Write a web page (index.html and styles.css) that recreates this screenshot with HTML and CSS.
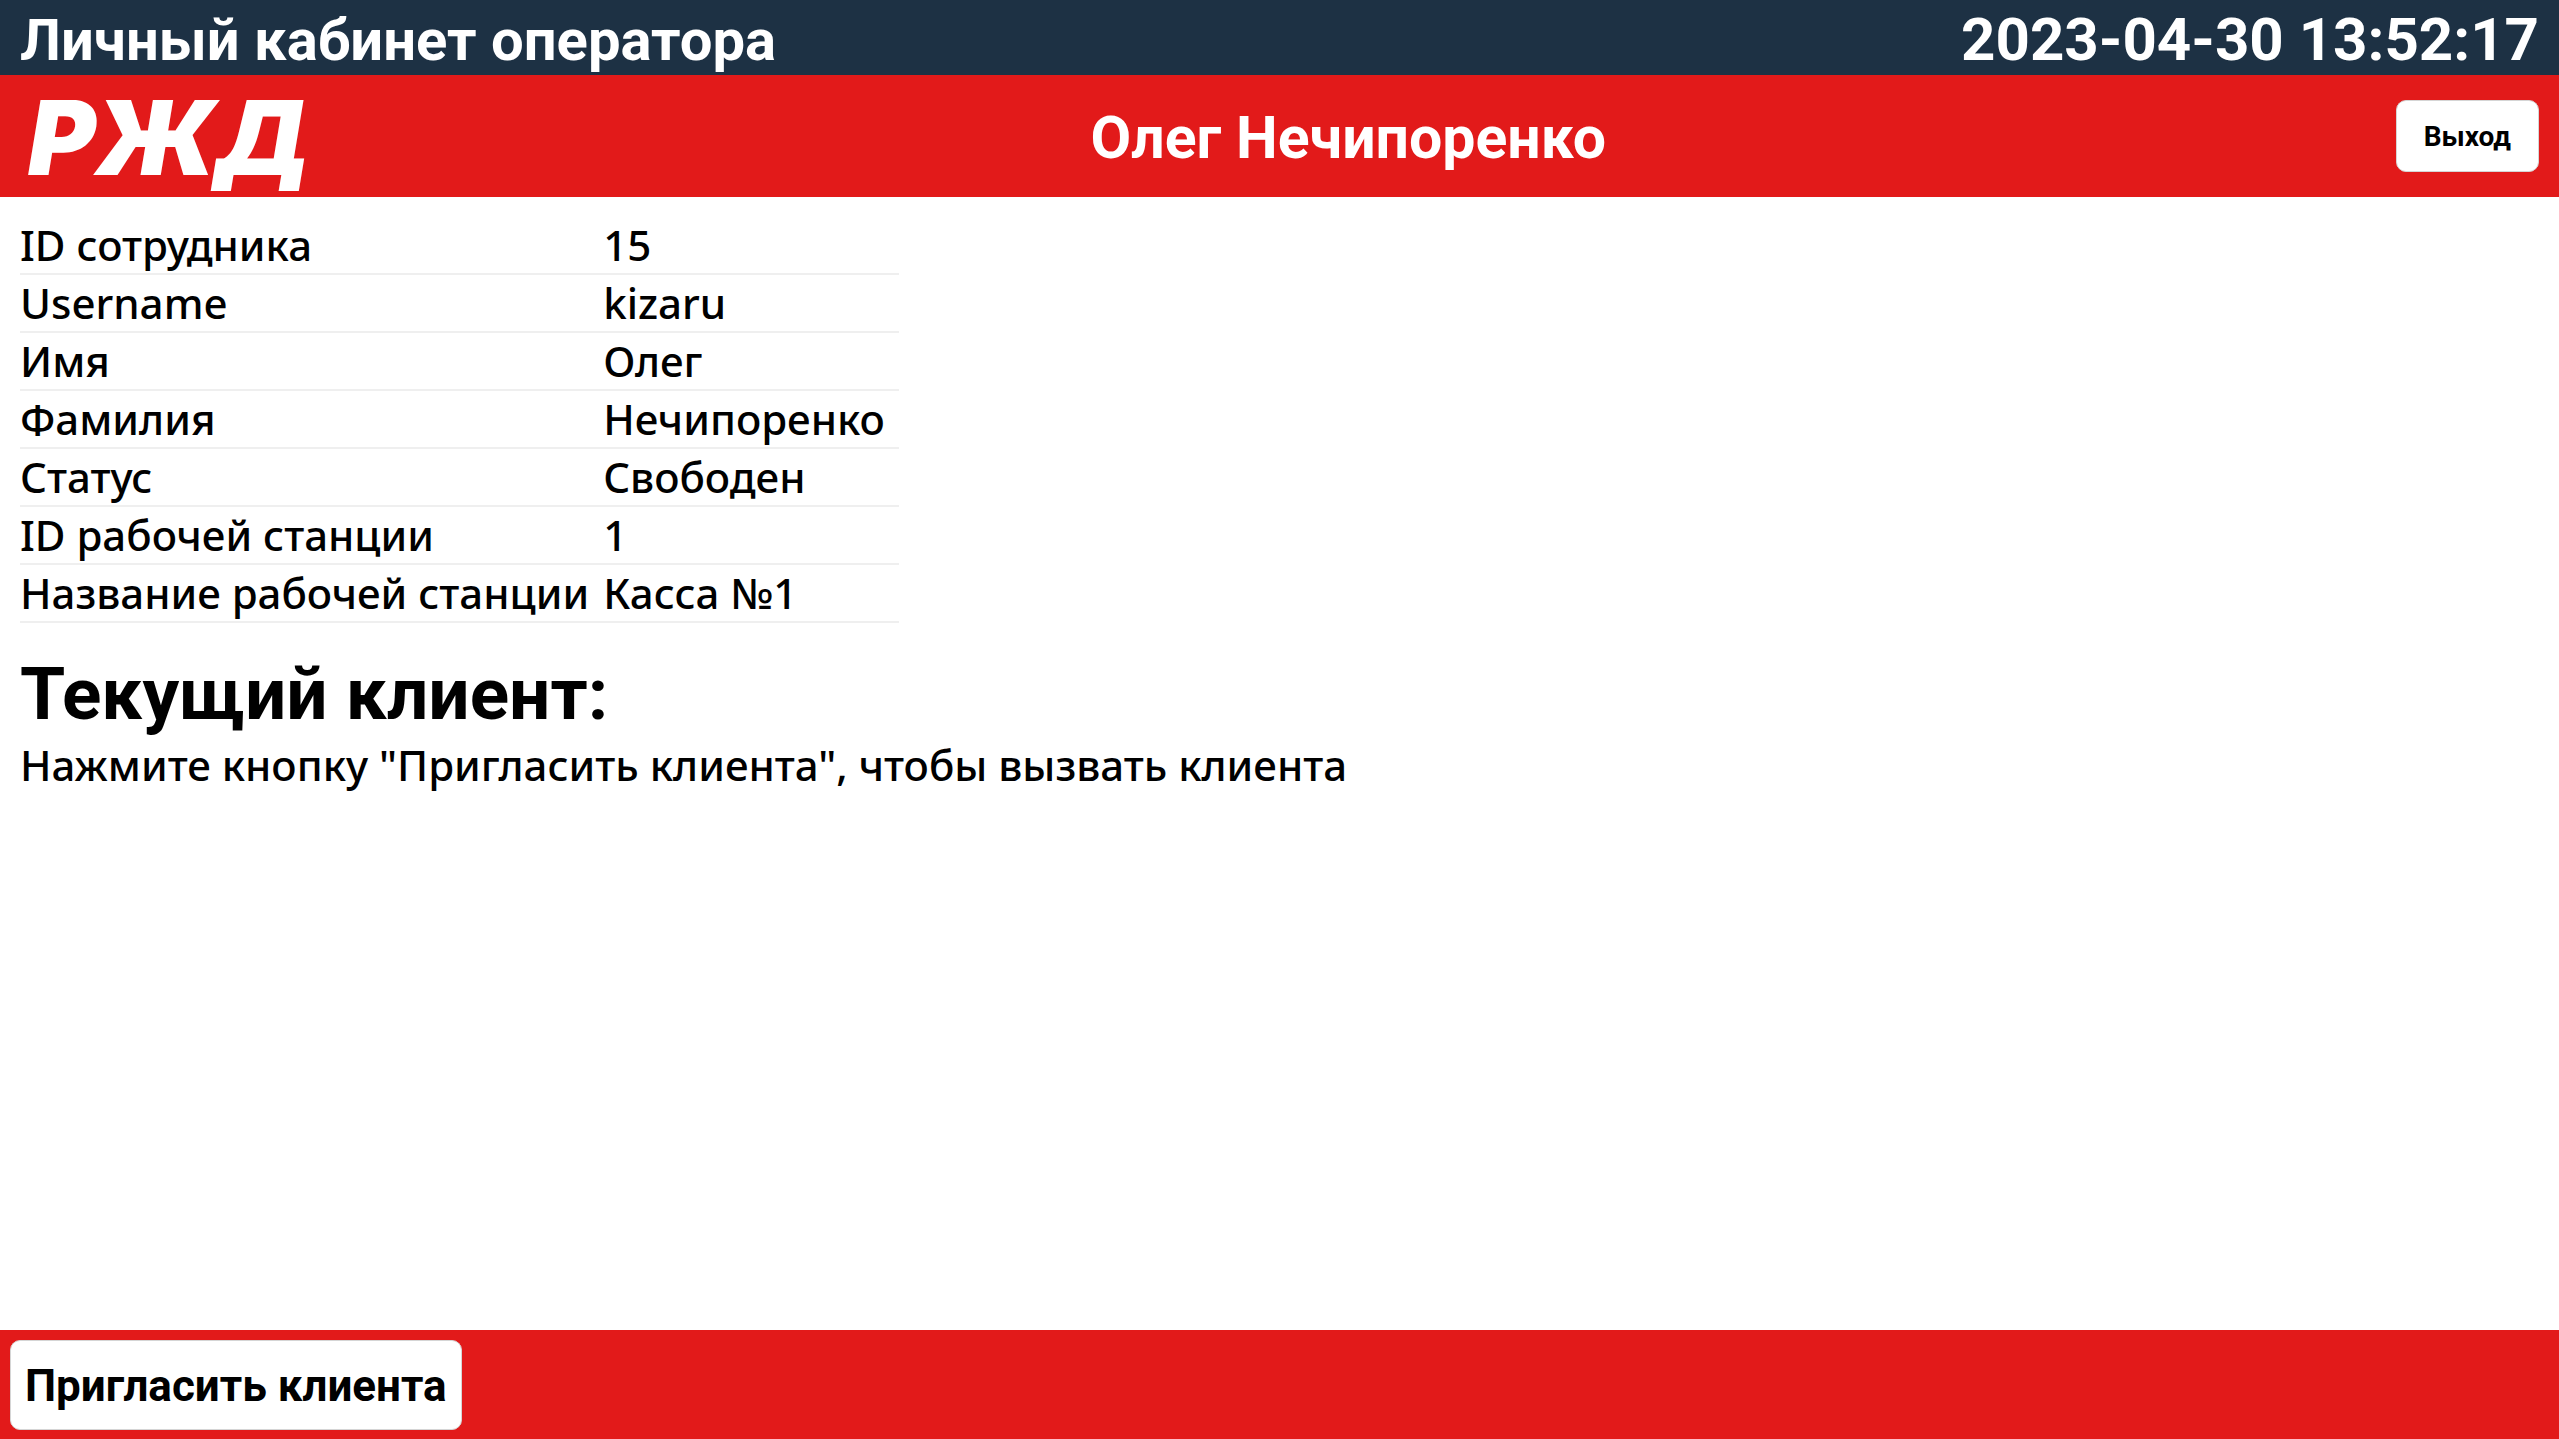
FILE: index.html
```html
<!DOCTYPE html>
<html lang="ru">
<head>
<meta charset="utf-8">
<title>Личный кабинет оператора</title>
<link rel="stylesheet" href="styles.css">
</head>
<body>
<div class="topbar">
  <h1 class="title">Личный кабинет оператора</h1>
  <time class="clock" datetime="2023-04-30T13:52:17">2023-04-30 13:52:17</time>
</div>
<header class="header">
  <span class="logo">РЖД</span>
  <h2 class="operator">Олег Нечипоренко</h2>
  <button class="button button-exit" type="button">Выход</button>
</header>
<main class="content">
  <table class="info">
    <tbody>
      <tr><th scope="row">ID сотрудника</th><td>15</td></tr>
      <tr><th scope="row">Username</th><td>kizaru</td></tr>
      <tr><th scope="row">Имя</th><td>Олег</td></tr>
      <tr><th scope="row">Фамилия</th><td>Нечипоренко</td></tr>
      <tr><th scope="row">Статус</th><td>Свободен</td></tr>
      <tr><th scope="row">ID рабочей станции</th><td>1</td></tr>
      <tr><th scope="row">Название рабочей станции</th><td>Касса №1</td></tr>
    </tbody>
  </table>
  <h2 class="client-title">Текущий клиент:</h2>
  <p class="client-hint">Нажмите кнопку "Пригласить клиента", чтобы вызвать клиента</p>
</main>
<footer class="footer">
  <button class="button button-invite" type="button">Пригласить клиента</button>
</footer>
</body>
</html>
```
FILE: styles.css
```css
* {
  box-sizing: border-box;
}

body {
  margin: 0;
  min-height: 100vh;
  display: flex;
  flex-direction: column;
  background: #fff;
  color: #000;
  font: 500 42px/56px "Noto Sans", sans-serif;
}

h1,
h2,
p {
  margin: 0;
}

.topbar,
.header {
  display: flex;
  justify-content: space-between;
  padding: 0 20px;
  color: #fff;
}

.topbar {
  align-items: baseline;
  padding-top: 5px;
  background: #1d3144;
}

.title,
.operator,
.clock {
  font: 700 58px/70px Roboto, sans-serif;
}

.clock {
  font-size: 60px;
}

.header {
  align-items: center;
  min-height: 122px;
  background: #e21a1a;
}

.logo {
  margin-right: -8px;
  padding: 4px 0 0 8px;
  font: italic 900 103px/104px Inter, sans-serif;
}

.operator {
  padding-top: 4px;
  font-size: 59px;
}

.button {
  border: 1px solid #d5d5d5;
  border-radius: 10px;
  background: #fff;
  color: #000;
  font-family: Roboto, sans-serif;
  font-weight: 700;
  cursor: pointer;
}

.button-exit {
  padding: 19px 27px 17px;
  font-size: 28px;
  line-height: 34px;
}

.content {
  flex: 1;
  padding: 20px;
}

.info {
  border-collapse: separate;
  border-spacing: 0;
}

.info th,
.info td {
  padding: 0 14px 0 0;
  border-bottom: 2px solid #efefef;
  font-weight: 500;
  text-align: left;
}

.client-title {
  margin-top: 28px;
  font: 700 73px/86px Roboto, sans-serif;
}

.footer {
  padding: 10px 10px 9px;
  background: #e21a1a;
}

.button-invite {
  display: block;
  padding: 19px 14px 17px;
  font-size: 44px;
  line-height: 52px;
}
```
